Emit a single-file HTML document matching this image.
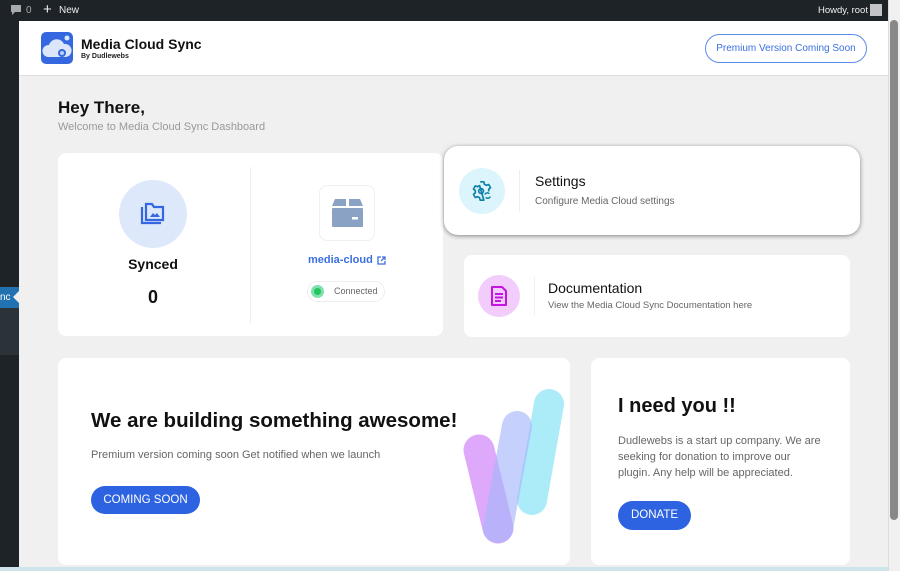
<!DOCTYPE html>
<html><head><meta charset="utf-8"><style>
*{margin:0;padding:0;box-sizing:border-box}
body{width:900px;height:571px;overflow:hidden;background:#f0f0f1;font-family:"Liberation Sans",Arial,sans-serif;position:relative}
.abs{position:absolute}
.card{position:absolute;background:#fff;border-radius:8px}
</style></head><body>
<!-- top bar -->
<div class="abs" style="left:0;top:0;width:900px;height:21px;background:#1d2327;color:#f0f0f1;font-size:10px">
 <svg class="abs" style="left:10px;top:5px" width="12" height="11" viewBox="0 0 12 11"><path d="M1 0h10v7H5l-3 3V7H1z" fill="#a7aaad"/></svg>
 <span class="abs" style="left:26px;top:5px;color:#a7aaad">0</span>
 <span class="abs" style="left:43px;top:1px;font-size:15px;line-height:17px">+</span>
 <span class="abs" style="left:59px;top:5px">New</span>
 <span class="abs" style="left:818px;top:5px;font-size:9.5px">Howdy, root</span>
 <div class="abs" style="left:870px;top:4px;width:12px;height:12px;background:#c3c4c7"></div>
</div>
<!-- sidebar -->
<div class="abs" style="left:0;top:21px;width:19px;height:550px;background:#1d2327"></div>
<div class="abs" style="left:0;top:287px;width:19px;height:21px;background:#2271b1;color:#fff;font-size:10px;line-height:21px;overflow:hidden">nc</div>
<div class="abs" style="left:13px;top:291px;width:0;height:0;border-top:6px solid transparent;border-bottom:6px solid transparent;border-right:6px solid #f0f0f1"></div>
<div class="abs" style="left:0;top:308px;width:19px;height:47px;background:#2c3338"></div>
<!-- scrollbar -->
<div class="abs" style="left:888px;top:0;width:12px;height:571px;background:#f0f0f0;border-left:1px solid #ddd"></div>
<div class="abs" style="left:890px;top:20px;width:8px;height:500px;background:#888;border-radius:4px"></div>
<div class="abs" style="left:0;top:567px;width:888px;height:4px;background:#cfe3ea"></div>
<!-- header -->
<div class="abs" style="left:19px;top:21px;width:869px;height:55px;background:#fff;border-bottom:1px solid #ddd"></div>
<div class="abs" style="left:41px;top:32px;width:32px;height:32px;background:#3568e0;border-radius:5px;overflow:hidden">
 <svg width="32" height="32" viewBox="0 0 32 32"><path d="M7 25a6 6 0 0 1 1-12 8 8 0 0 1 15-1 6.5 6.5 0 0 1 2 13z" fill="#dce6fb"/><circle cx="21" cy="21" r="4" fill="#3568e0"/><circle cx="21" cy="21" r="2" fill="#bcd0f7"/><circle cx="26" cy="6" r="2.5" fill="#dce6fb"/></svg>
</div>
<div class="abs" style="left:81px;top:36px;font-size:14px;font-weight:bold;color:#111">Media Cloud Sync</div>
<div class="abs" style="left:81px;top:53px;font-size:7px;font-weight:bold;color:#222">By Dudlewebs</div>
<div class="abs" style="left:705px;top:34px;width:162px;height:29px;border:1px solid #5b8def;border-radius:15px;color:#3a6fe0;font-size:10px;text-align:center;line-height:27px">Premium Version Coming Soon</div>
<!-- hey -->
<div class="abs" style="left:58px;top:98px;font-size:17px;font-weight:bold;color:#111">Hey There,</div>
<div class="abs" style="left:58px;top:121px;font-size:11px;color:#999">Welcome to Media Cloud Sync Dashboard</div>
<!-- stats card -->
<div class="card" style="left:58px;top:153px;width:385px;height:183px"></div>
<div class="abs" style="left:250px;top:167px;width:1px;height:156px;background:#eee"></div>
<div class="abs" style="left:119px;top:180px;width:68px;height:68px;border-radius:50%;background:#dee8fb"></div>
<svg class="abs" style="left:139px;top:201px" width="28" height="26" viewBox="0 0 28 26"><path d="M3 6v16h19" fill="none" stroke="#3568e0" stroke-width="2.2"/><path d="M7 3h6l2 3h9v13H7z" fill="none" stroke="#3568e0" stroke-width="2.2"/><path d="M11 16l3-4 2 2 2-2 3 4z" fill="#3568e0"/></svg>
<div class="abs" style="left:58px;top:256px;width:190px;text-align:center;font-size:14px;font-weight:bold;color:#111">Synced</div>
<div class="abs" style="left:58px;top:287px;width:190px;text-align:center;font-size:18px;font-weight:bold;color:#111">0</div>
<div class="abs" style="left:319px;top:185px;width:56px;height:56px;border:1px solid #f0f0f0;border-radius:8px"></div>
<svg class="abs" style="left:332px;top:199px" width="31" height="28" viewBox="0 0 31 28"><path d="M3 0h11v7H0zM17 0h11l3 7H17z" fill="#8aa2c4"/><rect x="0" y="9" width="31" height="19" rx="1" fill="#8aa2c4"/><rect x="20" y="18" width="6" height="2.5" fill="#fff"/></svg>
<div class="abs" style="left:308px;top:254px;font-size:11px;font-weight:bold;color:#3b6fe0">media-cloud</div>
<svg class="abs" style="left:377px;top:256px" width="9" height="9" viewBox="0 0 9 9"><path d="M4 1H1v7h7V5M5 1h3v3M8 1L4 5" fill="none" stroke="#3b6fe0" stroke-width="1.3"/></svg>
<div class="abs" style="left:307px;top:281px;width:78px;height:21px;border:1px solid #eee;border-radius:11px"></div>
<div class="abs" style="left:311px;top:285px;width:13px;height:13px;border-radius:50%;background:#7ee0ad"></div>
<div class="abs" style="left:314px;top:288px;width:7px;height:7px;border-radius:50%;background:#22c55e"></div>
<div class="abs" style="left:334px;top:286px;font-size:9px;color:#666">Connected</div>
<!-- settings -->
<div class="card" style="left:444px;top:146px;width:416px;height:89px;border-radius:14px;box-shadow:0 1px 5px rgba(0,0,0,.45)"></div>
<div class="abs" style="left:459px;top:168px;width:46px;height:46px;border-radius:50%;background:#dcf4fc"></div>
<svg class="abs" style="left:471px;top:180px" width="22" height="22" viewBox="0 0 24 24"><path d="M10 2h4l.6 2.6 2.2 1.2 2.5-.9 2 3.4-2 1.8v2.4M14 22h-4l-.6-2.6-2.2-1.2-2.5.9-2-3.4 2-1.8V11.6l-2-1.8 2-3.4 2.5.9 2.2-1.2z" fill="none" stroke="#0b7fa8" stroke-width="1.8" stroke-linejoin="round"/><circle cx="11" cy="12" r="2.6" fill="none" stroke="#0b7fa8" stroke-width="1.8"/><path d="M15 16a3 3 0 0 1 5-1M21 18a3 3 0 0 1-5 1" fill="none" stroke="#0b7fa8" stroke-width="1.6"/></svg>
<div class="abs" style="left:519px;top:170px;width:1px;height:42px;background:#eee"></div>
<div class="abs" style="left:535px;top:173px;font-size:14px;color:#111">Settings</div>
<div class="abs" style="left:535px;top:196px;font-size:10px;color:#666">Configure Media Cloud settings</div>
<!-- documentation -->
<div class="card" style="left:464px;top:255px;width:386px;height:82px"></div>
<div class="abs" style="left:478px;top:275px;width:42px;height:42px;border-radius:50%;background:#f2cdfc"></div>
<svg class="abs" style="left:490px;top:286px" width="18" height="20" viewBox="0 0 18 20"><path d="M2 1h10l4 4v14H2z" fill="none" stroke="#c314e0" stroke-width="2" stroke-linejoin="round"/><path d="M5 8h8M5 11.5h8M5 15h6" stroke="#c314e0" stroke-width="2"/></svg>
<div class="abs" style="left:534px;top:277px;width:1px;height:38px;background:#eee"></div>
<div class="abs" style="left:548px;top:280px;font-size:14px;color:#111">Documentation</div>
<div class="abs" style="left:548px;top:300px;font-size:9.5px;color:#666">View the Media Cloud Sync Documentation here</div>
<!-- building -->
<div class="card" style="left:58px;top:358px;width:512px;height:207px"></div>
<svg class="abs" style="left:0;top:0" width="900" height="571" viewBox="0 0 900 571">
 <line x1="549" y1="404" x2="532" y2="500" stroke="#9ee9f7" stroke-width="30" stroke-linecap="round" opacity=".85"/>
 <line x1="479" y1="450" x2="498" y2="528" stroke="#d99afb" stroke-width="31" stroke-linecap="round" opacity=".85"/>
 <line x1="517" y1="426" x2="498" y2="528" stroke="#a8b7fb" stroke-width="30" stroke-linecap="round" opacity=".65"/>
</svg>
<div class="abs" style="left:91px;top:409px;font-size:20.5px;font-weight:bold;color:#111">We are building something awesome!</div>
<div class="abs" style="left:91px;top:449px;font-size:11px;color:#666">Premium version coming soon Get notified when we launch</div>
<div class="abs" style="left:91px;top:486px;width:109px;height:28px;border-radius:14px;background:#2d63e0;color:#fff;font-size:11.5px;text-align:center;line-height:28px">COMING SOON</div>
<!-- need you -->
<div class="card" style="left:591px;top:358px;width:259px;height:207px"></div>
<div class="abs" style="left:618px;top:395px;font-size:20px;font-weight:bold;color:#111">I need you !!</div>
<div class="abs" style="left:618px;top:433px;width:204px;font-size:11px;line-height:16px;color:#666">Dudlewebs is a start up company. We are seeking for donation to improve our plugin. Any help will be appreciated.</div>
<div class="abs" style="left:618px;top:501px;width:73px;height:29px;border-radius:15px;background:#2d63e0;color:#fff;font-size:11.5px;text-align:center;line-height:29px">DONATE</div>
</body></html>
